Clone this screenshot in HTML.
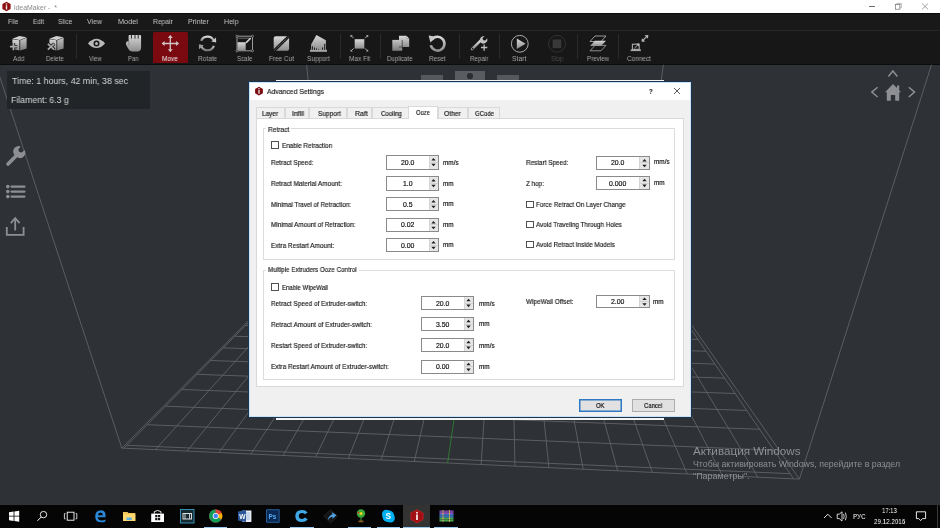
<!DOCTYPE html>
<html><head><meta charset="utf-8"><title>ideaMaker</title>
<style>
*{margin:0;padding:0;box-sizing:border-box}
html,body{width:940px;height:528px;overflow:hidden;background:#2e3135;font-family:"Liberation Sans", sans-serif;position:relative}
.a{position:absolute}
.k{-webkit-text-stroke:0.18px currentColor}
.t{position:absolute;line-height:1;white-space:nowrap;transform-origin:0 50%;will-change:transform}
svg{overflow:visible}
</style></head><body>
<div class="a" style="left:0.00px;top:0.00px;width:940.00px;height:13.20px;background:#ffffff;"></div>
<div class="a" style="left:0.00px;top:13.20px;width:940.00px;height:1.20px;background:#0b0b0b;"></div>
<svg class="a" style="left:1px;top:1px" width="11" height="11" viewBox="0 0 11 11">
<polygon points="5.5,0.8 9.6,3 9.6,8 5.5,10.2 1.4,8 1.4,3" fill="#8e0f12"/>
<rect x="4.8" y="4.3" width="1.4" height="4.2" fill="#e9e9e9"/><rect x="4.8" y="2.4" width="1.4" height="1.2" fill="#e9e9e9"/></svg>
<div class="t " style="left:13.60px;top:5px;font-size:6.90px;color:#8a8a8a;">ideaMaker - &nbsp;*</div>
<div class="a" style="left:868.90px;top:5.70px;width:6.00px;height:0.70px;background:#6a6a6a;"></div>
<svg class="a" style="left:894px;top:2px" width="9" height="9" viewBox="0 0 9 9"><rect x="1.3" y="2.6" width="4.6" height="4.6" fill="none" stroke="#666" stroke-width="0.65"/><path d="M2.8 2.6 V1.4 H7.3 V5.8 H5.9" fill="none" stroke="#888" stroke-width="0.6"/></svg>
<svg class="a" style="left:920px;top:1.5px" width="10" height="9" viewBox="0 0 10 9"><path d="M2.1 1.5 L8.1 7.4 M8.1 1.5 L2.1 7.4" stroke="#707070" stroke-width="0.65"/></svg>
<div class="a" style="left:0.00px;top:14.40px;width:940.00px;height:15.20px;background:#191919;"></div>
<div class="a" style="left:0.00px;top:29.60px;width:940.00px;height:0.60px;background:#0e0e0e;"></div>
<div class="a" style="left:0.00px;top:30.20px;width:940.00px;height:1.00px;background:#272727;"></div>
<div class="t " style="left:7.80px;top:19px;font-size:7.12px;color:#c4c4c4;transform:scaleX(0.915);">File</div>
<div class="t " style="left:32.80px;top:19px;font-size:7.12px;color:#c4c4c4;transform:scaleX(0.896);">Edit</div>
<div class="t " style="left:57.90px;top:19px;font-size:7.12px;color:#c4c4c4;transform:scaleX(0.926);">Slice</div>
<div class="t " style="left:86.90px;top:19px;font-size:7.12px;color:#c4c4c4;transform:scaleX(0.967);">View</div>
<div class="t " style="left:117.60px;top:19px;font-size:7.12px;color:#c4c4c4;transform:scaleX(1.026);">Model</div>
<div class="t " style="left:153.20px;top:19px;font-size:7.12px;color:#c4c4c4;transform:scaleX(0.948);">Repair</div>
<div class="t " style="left:188.00px;top:19px;font-size:7.12px;color:#c4c4c4;transform:scaleX(0.991);">Printer</div>
<div class="t " style="left:223.80px;top:19px;font-size:7.12px;color:#c4c4c4;transform:scaleX(0.983);">Help</div>
<div class="a" style="left:0.00px;top:31.20px;width:940.00px;height:33.00px;background:#171717;"></div>
<div class="a" style="left:0.00px;top:64.20px;width:940.00px;height:0.60px;background:#0d0d0d;"></div>
<div class="a" style="left:76.10px;top:34.00px;width:1.00px;height:25.00px;background:#2a2a2a;"></div>
<div class="a" style="left:339.70px;top:34.00px;width:1.00px;height:25.00px;background:#2a2a2a;"></div>
<div class="a" style="left:380.10px;top:34.00px;width:1.00px;height:25.00px;background:#2a2a2a;"></div>
<div class="a" style="left:458.50px;top:34.00px;width:1.00px;height:25.00px;background:#2a2a2a;"></div>
<div class="a" style="left:498.80px;top:34.00px;width:1.00px;height:25.00px;background:#2a2a2a;"></div>
<div class="a" style="left:576.50px;top:34.00px;width:1.00px;height:25.00px;background:#2a2a2a;"></div>
<div class="a" style="left:618.00px;top:34.00px;width:1.00px;height:25.00px;background:#2a2a2a;"></div>
<div class="a" style="left:152.80px;top:31.80px;width:35.30px;height:31.70px;background:#7a0a10;border-radius:1.5px;"></div>
<div class="t " style="left:12.80px;top:56px;font-size:6.70px;color:#a6a6a6;transform:scaleX(0.939);">Add</div>
<div class="t " style="left:46.05px;top:56px;font-size:6.70px;color:#a6a6a6;transform:scaleX(0.924);">Delete</div>
<div class="t " style="left:89.40px;top:56px;font-size:6.70px;color:#a6a6a6;transform:scaleX(0.874);">View</div>
<div class="t " style="left:127.90px;top:56px;font-size:6.70px;color:#a6a6a6;transform:scaleX(0.872);">Pan</div>
<div class="t " style="left:162.05px;top:56px;font-size:6.70px;color:#f2f2f2;transform:scaleX(0.958);">Move</div>
<div class="t " style="left:197.80px;top:56px;font-size:6.70px;color:#a6a6a6;transform:scaleX(0.972);">Rotate</div>
<div class="t " style="left:236.60px;top:56px;font-size:6.70px;color:#a6a6a6;transform:scaleX(0.918);">Scale</div>
<div class="t " style="left:268.80px;top:56px;font-size:6.70px;color:#a6a6a6;transform:scaleX(0.959);">Free Cut</div>
<div class="t " style="left:306.80px;top:56px;font-size:6.70px;color:#a6a6a6;transform:scaleX(0.971);">Support</div>
<div class="t " style="left:348.85px;top:56px;font-size:6.70px;color:#a6a6a6;transform:scaleX(0.969);">Max Fit</div>
<div class="t " style="left:387.45px;top:56px;font-size:6.70px;color:#a6a6a6;transform:scaleX(0.912);">Duplicate</div>
<div class="t " style="left:429.00px;top:56px;font-size:6.70px;color:#a6a6a6;transform:scaleX(0.948);">Reset</div>
<div class="t " style="left:469.55px;top:56px;font-size:6.70px;color:#a6a6a6;transform:scaleX(0.927);">Repair</div>
<div class="t " style="left:512.45px;top:56px;font-size:6.70px;color:#a6a6a6;transform:scaleX(1.010);">Start</div>
<div class="t " style="left:550.60px;top:56px;font-size:6.70px;color:#4a4a4a;transform:scaleX(0.885);">Stop</div>
<div class="t " style="left:586.80px;top:56px;font-size:6.70px;color:#a6a6a6;transform:scaleX(0.931);">Preview</div>
<div class="t " style="left:626.90px;top:56px;font-size:6.70px;color:#a6a6a6;transform:scaleX(0.961);">Connect</div>
<svg class="a" style="left:0;top:0" width="940" height="66" viewBox="0 0 940 66">
<defs>
<linearGradient id="g1" x1="0" y1="0" x2="0" y2="1"><stop offset="0" stop-color="#d8d8d8"/><stop offset="1" stop-color="#8e8e8e"/></linearGradient>
<linearGradient id="g2" x1="0" y1="0" x2="0" y2="1"><stop offset="0" stop-color="#c4c4c4"/><stop offset="1" stop-color="#7a7a7a"/></linearGradient>
</defs>
<!-- Add -->
<polygon points="12.4,38.7 19.3,35.9 26.6,37.3 19.8,39.9" fill="#d0d0d0"/>
<polygon points="12.4,39.2 19.4,40.2 19.4,50.5 12.4,48.8" fill="url(#g1)"/>
<polygon points="20.2,40.2 26.6,37.7 26.6,48.6 20.2,50.5" fill="url(#g2)"/>
<path d="M9.7 46.6 H17.2 M13.45 42.9 V50.4" stroke="#161616" stroke-width="3.4"/>
<path d="M9.9 46.6 H17 M13.45 43.1 V50.2" stroke="#aaaaaa" stroke-width="1.8"/>
<!-- Delete -->
<polygon points="49.4,38.7 56.3,35.9 63.6,37.3 56.8,39.9" fill="#d0d0d0"/>
<polygon points="49.4,39.2 56.4,40.2 56.4,50.5 49.4,48.8" fill="url(#g1)"/>
<polygon points="57.2,40.2 63.6,37.7 63.6,48.6 57.2,50.5" fill="url(#g2)"/>
<path d="M47.6 43.6 L54.4 49.8 M54.4 43.6 L47.6 49.8" stroke="#161616" stroke-width="3.2"/>
<path d="M47.8 43.8 L54.2 49.6 M54.2 43.8 L47.8 49.6" stroke="#aaaaaa" stroke-width="1.7"/>
<!-- View eye -->
<path d="M87.9 43.4 Q96.5 34.2 105.1 43.4 Q96.5 52.6 87.9 43.4 Z" fill="#b8b8b8"/>
<circle cx="96.5" cy="43.4" r="3.0" fill="#141414"/>
<circle cx="96.5" cy="43.4" r="1.5" fill="#b8b8b8"/>
<!-- Pan hand -->
<path d="M128.6 36 Q128.6 34.9 129.6 34.9 H140 Q141.1 34.9 141.1 36 V47.5 Q141.1 51.5 137.1 51.5 H132.6 Q129.6 51.5 128.4 49 L126.2 45 Q125.6 43.6 126.2 42.2 Q127 40.6 128.6 41.4 Z" fill="url(#g1)"/>
<path d="M131.4 34.8 V38.6 M135 34.8 V38.6 M138.2 34.8 V38.6" stroke="#161616" stroke-width="0.9"/>
<path d="M128.8 41.4 V45.5" stroke="#6a6a6a" stroke-width="0.5"/>
<!-- Move arrows -->
<path d="M162.5 43.5 H178.2 M170.3 35.8 V51.4" stroke="#d2c4c4" stroke-width="1.3"/>
<path d="M161.7 43.5 L164.6 41 V46 Z M179 43.5 L176.1 41 V46 Z M170.3 35 L167.8 37.9 H172.8 Z M170.3 52.1 L167.8 49.2 H172.8 Z" fill="#d2c4c4"/>
<!-- Rotate -->
<path d="M201.2 40.8 A6.8 6.8 0 0 1 213.6 40.3" fill="none" stroke="url(#g1)" stroke-width="2.2"/>
<path d="M213.9 45.8 A6.8 6.8 0 0 1 201.4 46.4" fill="none" stroke="url(#g2)" stroke-width="2.2"/>
<path d="M216 37.5 L216.2 42.6 L211.3 41.6 Z" fill="#c8c8c8"/>
<path d="M199 49.2 L198.9 44.2 L203.8 45.2 Z" fill="#9a9a9a"/>
<!-- Scale -->
<rect x="237" y="36.2" width="15.5" height="14.6" fill="none" stroke="#9a9a9a" stroke-width="1"/>
<path d="M238.2 38.2 H251.2" stroke="#8a8a8a" stroke-width="0.7"/>
<rect x="237.5" y="42.2" width="8.2" height="8.3" fill="url(#g1)"/>
<path d="M246.4 42.4 L250.2 38.6" stroke="#cfcfcf" stroke-width="1.5" stroke-linecap="round"/>
<circle cx="237" cy="36.2" r="1.1" fill="#161616" stroke="#aaa" stroke-width="0.6"/>
<circle cx="252.5" cy="36.2" r="1.1" fill="#161616" stroke="#aaa" stroke-width="0.6"/>
<circle cx="237" cy="50.8" r="1.1" fill="#161616" stroke="#aaa" stroke-width="0.6"/>
<circle cx="252.5" cy="50.8" r="1.1" fill="#161616" stroke="#aaa" stroke-width="0.6"/>
<!-- Free Cut -->
<rect x="273.7" y="36.3" width="15.4" height="14.4" rx="2" fill="url(#g1)"/>
<path d="M273.6 51.2 L289.4 35.8" stroke="#161616" stroke-width="2.8"/>
<path d="M274.4 50.4 L288.6 36.6" stroke="#b0b0b0" stroke-width="0.6" stroke-dasharray="1 0.7"/>
<!-- Support -->
<polygon points="311.1,44.6 316.4,35 325.9,40.3 325.9,50 311.1,50" fill="url(#g1)"/>
<rect x="310" y="49.8" width="17" height="2" fill="#a8a8a8"/>
<g fill="#161616">
<rect x="311.9" y="45.9" width="0.9" height="4" rx="0.45"/><rect x="314" y="47" width="0.9" height="2.9" rx="0.45"/>
<rect x="316" y="48.1" width="0.9" height="1.8" rx="0.45"/><rect x="318.1" y="49" width="0.9" height="0.9" rx="0.45"/>
<rect x="322" y="47" width="0.9" height="2.9" rx="0.45"/><rect x="324.2" y="43.8" width="0.9" height="6.1" rx="0.45"/>
</g>
<!-- Max Fit -->
<rect x="354.7" y="39.2" width="9.6" height="9.4" fill="url(#g1)"/>
<path d="M351 35.6 L353.6 38.2 M367.7 35.6 L365.1 38.2 M351 51 L353.6 48.4 M367.7 51 L365.1 48.4" stroke="#a8a8a8" stroke-width="1"/>
<path d="M350.4 35 L352.8 35.2 L350.6 37.4 Z M368.3 35 L365.9 35.2 L368.1 37.4 Z M350.4 51.6 L352.8 51.4 L350.6 49.2 Z M368.3 51.6 L365.9 51.4 L368.1 49.2 Z" fill="#a8a8a8"/>
<!-- Duplicate -->
<path d="M399 35.8 H406.3 L409.2 38.7 V47 H399 Z" fill="url(#g1)"/>
<path d="M406.3 35.8 L406.5 38.5 L409.2 38.7" fill="#e0e0e0" stroke="#555" stroke-width="0.3"/>
<rect x="392.3" y="39.9" width="9.9" height="10.9" fill="url(#g2)"/>
<path d="M402.2 39.9 V47 H399" fill="none" stroke="#171717" stroke-width="0.6"/>
<!-- Reset -->
<path d="M431.8 39.8 A6.9 6.9 0 1 1 430.8 45.2" fill="none" stroke="url(#g1)" stroke-width="2.6"/>
<path d="M428.6 35.6 L436.4 36.8 L430.4 42.4 Z" fill="#c8c8c8"/>
<!-- Repair -->
<path d="M472 49.2 L480.6 40.6" stroke="url(#g1)" stroke-width="2.6" stroke-linecap="round"/>
<path d="M480 41.5 A4.2 4.2 0 0 1 484.5 36 L482.4 38.3 L483.3 40.2 L485.3 40.6 L487.3 38.3 A4.2 4.2 0 0 1 481.6 43.3 Z" fill="#c2c2c2"/>
<circle cx="472.6" cy="48.6" r="0.8" fill="#171717"/>
<path d="M481 47.5 H487.3 M484.15 44.4 V50.8" stroke="#bdbdbd" stroke-width="1.3"/>
<!-- Start -->
<circle cx="519.8" cy="43.8" r="8.4" fill="none" stroke="#a9a9a9" stroke-width="1"/>
<path d="M516.8 38.6 L525.6 43.8 L516.8 49 Z" fill="url(#g1)"/>
<!-- Stop -->
<circle cx="557" cy="43.8" r="8.4" fill="none" stroke="#333" stroke-width="1"/>
<rect x="552.6" y="39.4" width="8.8" height="8.8" fill="#383838"/>
<!-- Preview -->
<polygon points="595,36 606,36 601,41.5 590,41.5" fill="none" stroke="#a9a9a9" stroke-width="0.9"/>
<polygon points="595,40.8 606,40.8 601,46 590,46" fill="url(#g1)"/>
<polygon points="595,45.4 606,45.4 601,50.8 590,50.8" fill="none" stroke="#9a9a9a" stroke-width="0.9"/>
<!-- Connect -->
<rect x="632.4" y="44.2" width="6.8" height="5.2" fill="#1a1a1a" stroke="#a9a9a9" stroke-width="1.1"/>
<rect x="630.7" y="49.4" width="10.2" height="1.7" fill="#a9a9a9"/>
<path d="M634.4 48.2 L638.2 44.6" stroke="#b8b8b8" stroke-width="0.9"/>
<path d="M639.2 43.4 L636.2 43.8 L638.8 46.4 Z" fill="#b8b8b8"/>
<path d="M642.2 41.2 L647.6 35.6" stroke="#b8b8b8" stroke-width="1.1"/>
<path d="M648.3 35 L644.6 35.3 L648 38.7 Z M641.6 41.8 L641.9 38.2 L645.2 41.5 Z" fill="#b8b8b8"/>
</svg>
<svg class="a" style="left:0;top:0" width="940" height="505" viewBox="0 0 940 505">
<g stroke="#63666a" stroke-width="0.85" fill="none"><line x1="126.93" y1="445.30" x2="790.05" y2="473.64"/><line x1="147.28" y1="424.71" x2="773.97" y2="450.20"/><line x1="165.56" y1="406.21" x2="759.63" y2="429.28"/><line x1="182.08" y1="389.51" x2="746.74" y2="410.49"/><line x1="197.07" y1="374.34" x2="735.11" y2="393.52"/><line x1="210.74" y1="360.52" x2="724.55" y2="378.12"/><line x1="223.25" y1="347.86" x2="714.93" y2="364.09"/><line x1="234.75" y1="336.23" x2="706.13" y2="351.25"/><line x1="245.35" y1="325.50" x2="698.03" y2="339.44"/><line x1="255.16" y1="315.58" x2="690.57" y2="328.56"/><line x1="264.26" y1="306.37" x2="683.68" y2="318.50"/><line x1="272.73" y1="297.81" x2="677.28" y2="309.17"/><line x1="280.62" y1="289.82" x2="671.32" y2="300.49"/><line x1="288.00" y1="282.36" x2="665.77" y2="292.39"/><line x1="294.92" y1="275.36" x2="660.59" y2="284.83"/><line x1="301.41" y1="268.80" x2="655.73" y2="277.74"/><line x1="307.51" y1="262.62" x2="651.17" y2="271.09"/><line x1="313.26" y1="256.80" x2="646.88" y2="264.83"/><line x1="318.69" y1="251.31" x2="642.84" y2="258.94"/><line x1="323.83" y1="246.11" x2="639.02" y2="253.38"/><line x1="328.69" y1="241.20" x2="635.42" y2="248.12"/><line x1="124.06" y1="448.20" x2="328.69" y2="241.20"/><line x1="155.46" y1="449.64" x2="343.61" y2="241.53"/><line x1="187.07" y1="451.09" x2="358.58" y2="241.87"/><line x1="218.89" y1="452.54" x2="373.59" y2="242.21"/><line x1="250.92" y1="454.01" x2="388.64" y2="242.55"/><line x1="283.16" y1="455.48" x2="403.73" y2="242.89"/><line x1="315.61" y1="456.97" x2="418.87" y2="243.23"/><line x1="348.28" y1="458.46" x2="434.05" y2="243.57"/><line x1="381.16" y1="459.97" x2="449.28" y2="243.92"/><line x1="414.27" y1="461.48" x2="464.54" y2="244.26"/><line x1="481.15" y1="464.54" x2="495.21" y2="244.95"/><line x1="514.93" y1="466.09" x2="510.61" y2="245.30"/><line x1="548.94" y1="467.64" x2="526.05" y2="245.65"/><line x1="583.18" y1="469.21" x2="541.54" y2="246.00"/><line x1="617.65" y1="470.78" x2="557.07" y2="246.35"/><line x1="652.36" y1="472.37" x2="572.65" y2="246.70"/><line x1="687.31" y1="473.97" x2="588.27" y2="247.05"/><line x1="722.50" y1="475.58" x2="603.94" y2="247.41"/><line x1="757.93" y1="477.20" x2="619.66" y2="247.76"/><line x1="793.61" y1="478.83" x2="635.42" y2="248.12"/><polyline points="331.91,236.86 121.80,448.10 799.40,479.10 639.91,250.95" fill="none"/></g>
<line x1="447.60" y1="463.01" x2="479.85" y2="244.61" stroke="#2f8a2f" stroke-width="0.8"/>
<g stroke="#6e7175" stroke-width="0.7">
<line x1="121.8" y1="448.1" x2="-4.2" y2="64.8"/>
<line x1="799.4" y1="479.1" x2="931.5" y2="64.8"/>
<line x1="306.6" y1="64.8" x2="308.2" y2="81"/>
<line x1="663.4" y1="64.8" x2="661.2" y2="81"/>
</g>
</svg>
<div class="a" style="left:6.50px;top:70.90px;width:143.50px;height:37.90px;background:#222528;"></div>
<div class="t " style="left:11.90px;top:77px;font-size:9.30px;color:#d8d8d8;transform:scaleX(0.950);">Time: 1 hours, 42 min, 38 sec</div>
<div class="t " style="left:11.20px;top:96px;font-size:9.30px;color:#d8d8d8;transform:scaleX(0.940);">Filament: 6.3 g</div>
<svg class="a" style="left:0;top:140px" width="40" height="100" viewBox="0 140 40 100">
<g fill="#8d8f92" stroke="#8d8f92">
<path d="M8 164 L17.5 154.5" stroke-width="3.6" stroke-linecap="round"/>
<path d="M16.2 156.2 A5.3 5.3 0 0 1 20.8 146.6 L18.3 149.4 L19.2 152 L21.9 152.6 L24.5 150 A5.3 5.3 0 0 1 17.8 157.6 Z" stroke="none"/>
<circle cx="7.8" cy="186.6" r="1.8" stroke="none"/><circle cx="7.8" cy="191.6" r="1.8" stroke="none"/><circle cx="7.8" cy="196.6" r="1.8" stroke="none"/>
<path d="M11.5 186.6 H24.5 M11.5 191.6 H24.5 M11.5 196.6 H24.5" stroke-width="2.2" stroke-linecap="round"/>
<path d="M6.8 227 V234.8 H23.6 V227" fill="none" stroke-width="1.8"/>
<path d="M15.2 230.5 V219.5" stroke-width="1.8"/>
<path d="M10.8 223.2 L15.2 218.2 L19.6 223.2" fill="none" stroke-width="1.8"/>
</g></svg>
<svg class="a" style="left:860px;top:60px" width="70" height="50" viewBox="860 60 70 50">
<g fill="none" stroke="#8d8f92" stroke-width="1.5">
<path d="M888.4 76.4 L892.9 71 L897.4 76.4"/>
<path d="M877.6 87.2 L871.8 92.1 L877.6 97"/>
<path d="M908.8 87.2 L914.6 92.1 L908.8 97"/>
</g>
<path d="M885 92.2 L893 84 L897 88 L897 85.6 L899.2 85.6 L899.2 90.2 L901 92.2 L899.2 92.2 L899.2 100.8 L895.2 100.8 L895.2 95 L890.8 95 L890.8 100.8 L886.8 100.8 L886.8 92.2 Z" fill="#8d8f92"/>
</svg>
<div class="a" style="left:421.00px;top:75.20px;width:21.60px;height:4.80px;background:#55585c;"></div>
<div class="a" style="left:454.80px;top:71.00px;width:30.60px;height:9.00px;background:#595c60;"></div>
<svg class="a" style="left:466px;top:72px" width="8" height="8"><circle cx="4" cy="4" r="3.1" fill="#2b2e31"/></svg>
<div class="a" style="left:496.70px;top:74.80px;width:22.40px;height:5.20px;background:#55585c;"></div>
<div class="t " style="left:692.80px;top:446px;font-size:10.75px;color:#8e9093;transform:scaleX(1.086);">Активация Windows</div>
<div class="t " style="left:692.80px;top:460px;font-size:8.66px;color:#8e9093;transform:scaleX(1.013);">Чтобы активировать Windows, перейдите в раздел</div>
<div class="t " style="left:692.80px;top:472px;font-size:8.66px;color:#8e9093;transform:scaleX(1.035);">"Параметры".</div>
<div class="a" style="left:275.50px;top:79.80px;width:388.50px;height:1.80px;background:#f4f4f4;"></div>
<div class="a" style="left:276.00px;top:417.60px;width:388.00px;height:2.40px;background:#f4f4f4;"></div>
<div class="a" style="left:248.00px;top:81.00px;width:444.00px;height:337.20px;background:#f0f0f0;border:1px solid #1a3553;"></div>
<div class="a" style="left:249.00px;top:82.00px;width:442.00px;height:1.00px;background:#c9e2f3;"></div>
<div class="a" style="left:249.00px;top:82.00px;width:1.00px;height:335.20px;background:#c9e2f3;"></div>
<div class="a" style="left:690.00px;top:82.00px;width:1.00px;height:335.20px;background:#c9e2f3;"></div>
<div class="a" style="left:249.00px;top:416.20px;width:442.00px;height:1.00px;background:#c9e2f3;"></div>
<div class="a" style="left:250.00px;top:83.00px;width:440.00px;height:16.80px;background:#ffffff;"></div>
<svg class="a" style="left:254px;top:86px" width="10" height="10" viewBox="0 0 10 10">
<polygon points="5,0.8 8.9,3 8.9,7.2 5,9.4 1.1,7.2 1.1,3" fill="#7d0c10"/>
<rect x="4.35" y="3.9" width="1.3" height="3.8" fill="#eaeaea"/><rect x="4.35" y="2.1" width="1.3" height="1.1" fill="#eaeaea"/></svg>
<div class="t k" style="left:267.00px;top:88px;font-size:7.82px;color:#1a1a1a;transform:scaleX(0.874);">Advanced Settings</div>
<div class="t k" style="left:649.00px;top:88px;font-size:8.10px;color:#222;font-weight:bold;transform:scaleX(0.728);">?</div>
<svg class="a" style="left:673px;top:87px" width="8" height="8" viewBox="0 0 8 8"><path d="M1 1 L7 7 M7 1 L1 7" stroke="#333" stroke-width="0.8"/></svg>
<div class="a" style="left:256.00px;top:107.40px;width:29.00px;height:11.20px;background:#f0f0f0;border:1px solid #d9d9d9;border-bottom:none;"></div>
<div class="t k" style="left:261.80px;top:110px;font-size:7.00px;color:#1a1a1a;transform:scaleX(0.914);">Layer</div>
<div class="a" style="left:285.00px;top:107.40px;width:24.00px;height:11.20px;background:#f0f0f0;border:1px solid #d9d9d9;border-bottom:none;"></div>
<div class="t k" style="left:292.00px;top:110px;font-size:7.00px;color:#1a1a1a;transform:scaleX(0.956);">Infill</div>
<div class="a" style="left:309.00px;top:107.40px;width:37.50px;height:11.20px;background:#f0f0f0;border:1px solid #d9d9d9;border-bottom:none;"></div>
<div class="t k" style="left:317.70px;top:110px;font-size:7.00px;color:#1a1a1a;transform:scaleX(0.934);">Support</div>
<div class="a" style="left:346.50px;top:107.40px;width:25.50px;height:11.20px;background:#f0f0f0;border:1px solid #d9d9d9;border-bottom:none;"></div>
<div class="t k" style="left:354.60px;top:110px;font-size:7.00px;color:#1a1a1a;transform:scaleX(0.989);">Raft</div>
<div class="a" style="left:372.00px;top:107.40px;width:36.50px;height:11.20px;background:#f0f0f0;border:1px solid #d9d9d9;border-bottom:none;"></div>
<div class="t k" style="left:380.80px;top:110px;font-size:7.00px;color:#1a1a1a;transform:scaleX(0.876);">Cooling</div>
<div class="a" style="left:438.00px;top:107.40px;width:29.50px;height:11.20px;background:#f0f0f0;border:1px solid #d9d9d9;border-bottom:none;"></div>
<div class="t k" style="left:444.00px;top:110px;font-size:7.00px;color:#1a1a1a;transform:scaleX(0.954);">Other</div>
<div class="a" style="left:467.50px;top:107.40px;width:32.10px;height:11.20px;background:#f0f0f0;border:1px solid #d9d9d9;border-bottom:none;"></div>
<div class="t k" style="left:475.00px;top:110px;font-size:7.00px;color:#1a1a1a;transform:scaleX(0.852);">GCode</div>
<div class="a" style="left:255.70px;top:118.30px;width:428.10px;height:268.30px;background:#ffffff;border:1px solid #d9d9d9;"></div>
<div class="a" style="left:408.20px;top:106.40px;width:30.10px;height:13.00px;background:#ffffff;border:1px solid #d9d9d9;border-bottom:none;"></div>
<div class="t k" style="left:416.00px;top:109px;font-size:7.00px;color:#1a1a1a;transform:scaleX(0.837);">Ooze</div>
<div class="a" style="left:262.50px;top:128.30px;width:412.10px;height:131.60px;border:1px solid #dcdcdc;"></div>
<div class="a" style="left:265.70px;top:127.30px;width:25.30px;height:3.00px;background:#ffffff;"></div>
<div class="t k" style="left:267.70px;top:126px;font-size:7.54px;color:#1a1a1a;transform:scaleX(0.876);">Retract</div>
<div class="a" style="left:271.00px;top:141.00px;width:7.60px;height:7.60px;background:#ffffff;border:1px solid #505050;"></div>
<div class="t k" style="left:281.80px;top:142px;font-size:7.40px;color:#1a1a1a;transform:scaleX(0.853);">Enable Retraction</div>
<div class="t k" style="left:270.80px;top:160px;font-size:7.12px;color:#1a1a1a;transform:scaleX(0.897);">Retract Speed:</div>
<div class="a" style="left:386.20px;top:155.30px;width:53.20px;height:14.30px;background:#ffffff;border:1px solid #8a8a8a;"></div>
<div class="a" style="left:429.00px;top:156.30px;width:9.40px;height:12.30px;background:#e6e6e6;border-left:1px solid #d4d4d4;"></div>
<div class="a" style="left:430.00px;top:162.10px;width:8.40px;height:0.70px;background:#d2d2d2;"></div>
<svg class="a" style="left:431.45px;top:155.30px" width="5" height="14.30" viewBox="0 0 5 14.30"><path d="M0.3 5.55 L2.5 2.95 L4.7 5.55 Z M0.3 8.75 L2.5 11.35 L4.7 8.75 Z" fill="#1e1e1e"/></svg>
<div class="t k" style="left:400.89px;top:160px;font-size:6.90px;color:#111;">20.0</div>
<div class="t k" style="left:442.70px;top:160px;font-size:6.40px;color:#1a1a1a;">mm/s</div>
<div class="t k" style="left:270.80px;top:181px;font-size:7.12px;color:#1a1a1a;transform:scaleX(0.906);">Retract Material Amount:</div>
<div class="a" style="left:386.20px;top:176.30px;width:53.20px;height:14.30px;background:#ffffff;border:1px solid #8a8a8a;"></div>
<div class="a" style="left:429.00px;top:177.30px;width:9.40px;height:12.30px;background:#e6e6e6;border-left:1px solid #d4d4d4;"></div>
<div class="a" style="left:430.00px;top:183.10px;width:8.40px;height:0.70px;background:#d2d2d2;"></div>
<svg class="a" style="left:431.45px;top:176.30px" width="5" height="14.30" viewBox="0 0 5 14.30"><path d="M0.3 5.55 L2.5 2.95 L4.7 5.55 Z M0.3 8.75 L2.5 11.35 L4.7 8.75 Z" fill="#1e1e1e"/></svg>
<div class="t k" style="left:402.80px;top:181px;font-size:6.90px;color:#111;">1.0</div>
<div class="t k" style="left:442.70px;top:181px;font-size:6.40px;color:#1a1a1a;">mm</div>
<div class="t k" style="left:270.80px;top:202px;font-size:7.12px;color:#1a1a1a;transform:scaleX(0.889);">Minimal Travel of Retraction:</div>
<div class="a" style="left:386.20px;top:197.00px;width:53.20px;height:14.30px;background:#ffffff;border:1px solid #8a8a8a;"></div>
<div class="a" style="left:429.00px;top:198.00px;width:9.40px;height:12.30px;background:#e6e6e6;border-left:1px solid #d4d4d4;"></div>
<div class="a" style="left:430.00px;top:203.80px;width:8.40px;height:0.70px;background:#d2d2d2;"></div>
<svg class="a" style="left:431.45px;top:197.00px" width="5" height="14.30" viewBox="0 0 5 14.30"><path d="M0.3 5.55 L2.5 2.95 L4.7 5.55 Z M0.3 8.75 L2.5 11.35 L4.7 8.75 Z" fill="#1e1e1e"/></svg>
<div class="t k" style="left:402.80px;top:202px;font-size:6.90px;color:#111;">0.5</div>
<div class="t k" style="left:442.70px;top:201px;font-size:6.40px;color:#1a1a1a;">mm</div>
<div class="t k" style="left:270.80px;top:222px;font-size:7.12px;color:#1a1a1a;transform:scaleX(0.889);">Minimal Amount of Retraction:</div>
<div class="a" style="left:386.20px;top:217.60px;width:53.20px;height:14.30px;background:#ffffff;border:1px solid #8a8a8a;"></div>
<div class="a" style="left:429.00px;top:218.60px;width:9.40px;height:12.30px;background:#e6e6e6;border-left:1px solid #d4d4d4;"></div>
<div class="a" style="left:430.00px;top:224.40px;width:8.40px;height:0.70px;background:#d2d2d2;"></div>
<svg class="a" style="left:431.45px;top:217.60px" width="5" height="14.30" viewBox="0 0 5 14.30"><path d="M0.3 5.55 L2.5 2.95 L4.7 5.55 Z M0.3 8.75 L2.5 11.35 L4.7 8.75 Z" fill="#1e1e1e"/></svg>
<div class="t k" style="left:400.89px;top:222px;font-size:6.90px;color:#111;">0.02</div>
<div class="t k" style="left:442.70px;top:222px;font-size:6.40px;color:#1a1a1a;">mm</div>
<div class="t k" style="left:270.80px;top:243px;font-size:7.12px;color:#1a1a1a;transform:scaleX(0.911);">Extra Restart Amount:</div>
<div class="a" style="left:386.20px;top:238.00px;width:53.20px;height:14.30px;background:#ffffff;border:1px solid #8a8a8a;"></div>
<div class="a" style="left:429.00px;top:239.00px;width:9.40px;height:12.30px;background:#e6e6e6;border-left:1px solid #d4d4d4;"></div>
<div class="a" style="left:430.00px;top:244.80px;width:8.40px;height:0.70px;background:#d2d2d2;"></div>
<svg class="a" style="left:431.45px;top:238.00px" width="5" height="14.30" viewBox="0 0 5 14.30"><path d="M0.3 5.55 L2.5 2.95 L4.7 5.55 Z M0.3 8.75 L2.5 11.35 L4.7 8.75 Z" fill="#1e1e1e"/></svg>
<div class="t k" style="left:400.89px;top:243px;font-size:6.90px;color:#111;">0.00</div>
<div class="t k" style="left:442.70px;top:242px;font-size:6.40px;color:#1a1a1a;">mm</div>
<div class="t k" style="left:526.00px;top:160px;font-size:7.12px;color:#1a1a1a;transform:scaleX(0.894);">Restart Speed:</div>
<div class="a" style="left:596.30px;top:155.60px;width:53.40px;height:14.30px;background:#ffffff;border:1px solid #8a8a8a;"></div>
<div class="a" style="left:639.30px;top:156.60px;width:9.40px;height:12.30px;background:#e6e6e6;border-left:1px solid #d4d4d4;"></div>
<div class="a" style="left:640.30px;top:162.40px;width:8.40px;height:0.70px;background:#d2d2d2;"></div>
<svg class="a" style="left:641.75px;top:155.60px" width="5" height="14.30" viewBox="0 0 5 14.30"><path d="M0.3 5.55 L2.5 2.95 L4.7 5.55 Z M0.3 8.75 L2.5 11.35 L4.7 8.75 Z" fill="#1e1e1e"/></svg>
<div class="t k" style="left:611.09px;top:160px;font-size:6.90px;color:#111;">20.0</div>
<div class="t k" style="left:653.60px;top:159px;font-size:6.40px;color:#1a1a1a;">mm/s</div>
<div class="t k" style="left:526.00px;top:181px;font-size:7.12px;color:#1a1a1a;transform:scaleX(0.891);">Z hop:</div>
<div class="a" style="left:596.30px;top:176.40px;width:53.40px;height:13.90px;background:#ffffff;border:1px solid #8a8a8a;"></div>
<div class="a" style="left:639.30px;top:177.40px;width:9.40px;height:11.90px;background:#e6e6e6;border-left:1px solid #d4d4d4;"></div>
<div class="a" style="left:640.30px;top:183.00px;width:8.40px;height:0.70px;background:#d2d2d2;"></div>
<svg class="a" style="left:641.75px;top:176.40px" width="5" height="13.90" viewBox="0 0 5 13.90"><path d="M0.3 5.35 L2.5 2.75 L4.7 5.35 Z M0.3 8.55 L2.5 11.15 L4.7 8.55 Z" fill="#1e1e1e"/></svg>
<div class="t k" style="left:609.17px;top:181px;font-size:6.90px;color:#111;">0.000</div>
<div class="t k" style="left:653.60px;top:180px;font-size:6.40px;color:#1a1a1a;">mm</div>
<div class="a" style="left:526.00px;top:201.00px;width:7.60px;height:7.40px;background:#ffffff;border:1px solid #505050;"></div>
<div class="t k" style="left:536.20px;top:201px;font-size:7.40px;color:#1a1a1a;transform:scaleX(0.852);">Force Retract On Layer Change</div>
<div class="a" style="left:526.00px;top:220.50px;width:7.60px;height:7.40px;background:#ffffff;border:1px solid #505050;"></div>
<div class="t k" style="left:536.20px;top:221px;font-size:7.40px;color:#1a1a1a;transform:scaleX(0.852);">Avoid Traveling Through Holes</div>
<div class="a" style="left:526.00px;top:240.60px;width:7.60px;height:7.40px;background:#ffffff;border:1px solid #505050;"></div>
<div class="t k" style="left:536.20px;top:241px;font-size:7.40px;color:#1a1a1a;transform:scaleX(0.858);">Avoid Retract Inside Models</div>
<div class="a" style="left:262.50px;top:269.60px;width:412.10px;height:110.00px;border:1px solid #dcdcdc;"></div>
<div class="a" style="left:265.90px;top:268.60px;width:92.90px;height:3.00px;background:#ffffff;"></div>
<div class="t k" style="left:267.90px;top:266px;font-size:7.40px;color:#1a1a1a;transform:scaleX(0.847);">Multiple Extruders Ooze Control</div>
<div class="a" style="left:271.40px;top:283.00px;width:7.40px;height:7.60px;background:#ffffff;border:1px solid #505050;"></div>
<div class="t k" style="left:282.00px;top:284px;font-size:7.26px;color:#1a1a1a;transform:scaleX(0.836);">Enable WipeWall</div>
<div class="t k" style="left:270.70px;top:300px;font-size:7.68px;color:#1a1a1a;transform:scaleX(0.839);">Retract Speed of Extruder-switch:</div>
<div class="a" style="left:421.20px;top:296.40px;width:53.20px;height:13.90px;background:#ffffff;border:1px solid #8a8a8a;"></div>
<div class="a" style="left:464.00px;top:297.40px;width:9.40px;height:11.90px;background:#e6e6e6;border-left:1px solid #d4d4d4;"></div>
<div class="a" style="left:465.00px;top:303.00px;width:8.40px;height:0.70px;background:#d2d2d2;"></div>
<svg class="a" style="left:466.45px;top:296.40px" width="5" height="13.90" viewBox="0 0 5 13.90"><path d="M0.3 5.35 L2.5 2.75 L4.7 5.35 Z M0.3 8.55 L2.5 11.15 L4.7 8.55 Z" fill="#1e1e1e"/></svg>
<div class="t k" style="left:435.89px;top:301px;font-size:6.90px;color:#111;">20.0</div>
<div class="t k" style="left:478.60px;top:301px;font-size:6.40px;color:#1a1a1a;">mm/s</div>
<div class="t k" style="left:270.70px;top:321px;font-size:7.68px;color:#1a1a1a;transform:scaleX(0.852);">Retract Amount of Extruder-switch:</div>
<div class="a" style="left:421.20px;top:317.20px;width:53.20px;height:13.90px;background:#ffffff;border:1px solid #8a8a8a;"></div>
<div class="a" style="left:464.00px;top:318.20px;width:9.40px;height:11.90px;background:#e6e6e6;border-left:1px solid #d4d4d4;"></div>
<div class="a" style="left:465.00px;top:323.80px;width:8.40px;height:0.70px;background:#d2d2d2;"></div>
<svg class="a" style="left:466.45px;top:317.20px" width="5" height="13.90" viewBox="0 0 5 13.90"><path d="M0.3 5.35 L2.5 2.75 L4.7 5.35 Z M0.3 8.55 L2.5 11.15 L4.7 8.55 Z" fill="#1e1e1e"/></svg>
<div class="t k" style="left:435.89px;top:322px;font-size:6.90px;color:#111;">3.50</div>
<div class="t k" style="left:478.60px;top:321px;font-size:6.40px;color:#1a1a1a;">mm</div>
<div class="t k" style="left:270.70px;top:342px;font-size:7.68px;color:#1a1a1a;transform:scaleX(0.839);">Restart Speed of Extruder-switch:</div>
<div class="a" style="left:421.20px;top:338.40px;width:53.20px;height:13.90px;background:#ffffff;border:1px solid #8a8a8a;"></div>
<div class="a" style="left:464.00px;top:339.40px;width:9.40px;height:11.90px;background:#e6e6e6;border-left:1px solid #d4d4d4;"></div>
<div class="a" style="left:465.00px;top:345.00px;width:8.40px;height:0.70px;background:#d2d2d2;"></div>
<svg class="a" style="left:466.45px;top:338.40px" width="5" height="13.90" viewBox="0 0 5 13.90"><path d="M0.3 5.35 L2.5 2.75 L4.7 5.35 Z M0.3 8.55 L2.5 11.15 L4.7 8.55 Z" fill="#1e1e1e"/></svg>
<div class="t k" style="left:435.89px;top:343px;font-size:6.90px;color:#111;">20.0</div>
<div class="t k" style="left:478.60px;top:343px;font-size:6.40px;color:#1a1a1a;">mm/s</div>
<div class="t k" style="left:270.70px;top:363px;font-size:7.68px;color:#1a1a1a;transform:scaleX(0.851);">Extra Restart Amount of Extruder-switch:</div>
<div class="a" style="left:421.20px;top:359.80px;width:53.20px;height:13.90px;background:#ffffff;border:1px solid #8a8a8a;"></div>
<div class="a" style="left:464.00px;top:360.80px;width:9.40px;height:11.90px;background:#e6e6e6;border-left:1px solid #d4d4d4;"></div>
<div class="a" style="left:465.00px;top:366.40px;width:8.40px;height:0.70px;background:#d2d2d2;"></div>
<svg class="a" style="left:466.45px;top:359.80px" width="5" height="13.90" viewBox="0 0 5 13.90"><path d="M0.3 5.35 L2.5 2.75 L4.7 5.35 Z M0.3 8.55 L2.5 11.15 L4.7 8.55 Z" fill="#1e1e1e"/></svg>
<div class="t k" style="left:435.89px;top:364px;font-size:6.90px;color:#111;">0.00</div>
<div class="t k" style="left:478.60px;top:364px;font-size:6.40px;color:#1a1a1a;">mm</div>
<div class="t k" style="left:525.80px;top:298px;font-size:7.40px;color:#1a1a1a;transform:scaleX(0.872);">WipeWall Offset:</div>
<div class="a" style="left:596.00px;top:294.60px;width:53.60px;height:13.30px;background:#ffffff;border:1px solid #8a8a8a;"></div>
<div class="a" style="left:639.20px;top:295.60px;width:9.40px;height:11.30px;background:#e6e6e6;border-left:1px solid #d4d4d4;"></div>
<div class="a" style="left:640.20px;top:300.90px;width:8.40px;height:0.70px;background:#d2d2d2;"></div>
<svg class="a" style="left:641.65px;top:294.60px" width="5" height="13.30" viewBox="0 0 5 13.30"><path d="M0.3 5.05 L2.5 2.45 L4.7 5.05 Z M0.3 8.25 L2.5 10.85 L4.7 8.25 Z" fill="#1e1e1e"/></svg>
<div class="t k" style="left:610.89px;top:299px;font-size:6.90px;color:#111;">2.00</div>
<div class="t k" style="left:653.00px;top:299px;font-size:6.40px;color:#1a1a1a;">mm</div>
<div class="a" style="left:579.00px;top:399.00px;width:42.80px;height:13.20px;background:#e1e1e1;border:1px solid #2f78c4;box-shadow:inset 0 0 0 0.5px #2f78c4;"></div>
<div class="t k" style="left:596.15px;top:402px;font-size:7.54px;color:#111;transform:scaleX(0.780);">OK</div>
<div class="a" style="left:632.20px;top:399.00px;width:42.80px;height:13.40px;background:#e1e1e1;border:1px solid #adadad;"></div>
<div class="t k" style="left:644.30px;top:402px;font-size:7.54px;color:#111;transform:scaleX(0.792);">Cancel</div>
<div class="a" style="left:0.00px;top:504.80px;width:940.00px;height:23.20px;background:#050505;"></div>
<div class="a" style="left:403.00px;top:504.80px;width:27.40px;height:23.20px;background:#333333;"></div>
<div class="a" style="left:203.90px;top:526.80px;width:23.00px;height:1.20px;background:#99c9ef;"></div>
<div class="a" style="left:290.00px;top:526.80px;width:24.00px;height:1.20px;background:#99c9ef;"></div>
<div class="a" style="left:348.00px;top:526.80px;width:23.00px;height:1.20px;background:#99c9ef;"></div>
<div class="a" style="left:376.70px;top:526.80px;width:23.00px;height:1.20px;background:#99c9ef;"></div>
<div class="a" style="left:403.00px;top:526.80px;width:27.40px;height:1.20px;background:#99c9ef;"></div>
<div class="a" style="left:434.00px;top:526.80px;width:24.00px;height:1.20px;background:#99c9ef;"></div>
<svg class="a" style="left:0;top:500px" width="940" height="28" viewBox="0 500 940 28">
<!-- windows -->
<path d="M9 512.2 L13.6 511.5 V515.8 H9 Z M14.4 511.4 L19.2 510.7 V515.8 H14.4 Z M9 516.6 H13.6 V520.9 L9 520.2 Z M14.4 516.6 H19.2 V521.7 L14.4 521 Z" fill="#ffffff"/>
<!-- search -->
<circle cx="43.5" cy="514.6" r="3.2" fill="none" stroke="#fff" stroke-width="0.9"/>
<path d="M41.2 517 L37.5 520.8" stroke="#fff" stroke-width="1"/>
<!-- task view -->
<rect x="67.2" y="512.2" width="6.8" height="8" fill="none" stroke="#fff" stroke-width="0.9"/>
<path d="M65.6 513.6 H64.4 V518.8 H65.6 M75.6 513.6 H76.8 V518.8 H75.6" fill="none" stroke="#fff" stroke-width="0.8"/>
<!-- edge -->
<path d="M105.6 517.2 H97.8 Q98.2 520.4 101.6 520.4 Q103.8 520.4 105.4 519.4 V521.4 Q103.6 522.3 101.2 522.3 Q95.2 522.3 95.2 516.4 Q95.2 510.2 101.2 510.2 Q106.2 510.2 105.6 517.2 Z M97.9 515.2 H102.9 Q102.8 512.6 100.6 512.6 Q98.3 512.6 97.9 515.2 Z" fill="#2b88d8" fill-rule="evenodd"/>
<!-- folder -->
<path d="M123 512 H127.5 L128.5 513 H135.3 V521 H123 Z" fill="#f0c65a"/>
<rect x="123" y="514.2" width="12.3" height="6.8" fill="#ffd86e"/>
<rect x="126.5" y="517.5" width="5.3" height="2.6" fill="#5db0e6"/>
<!-- store -->
<path d="M151.2 513.6 H164 V522 H151.2 Z" fill="#fff"/>
<path d="M154.3 513.6 V511.6 Q157.6 509.4 160.9 511.6 V513.6" fill="none" stroke="#fff" stroke-width="0.9"/>
<path d="M155.2 515 H157.4 V517.3 H155.2 Z M158 515 H160.2 V517.3 H158 Z M155.2 517.9 H157.4 V520.2 H155.2 Z M158 517.9 H160.2 V520.2 H158 Z" fill="#111"/>
<!-- film -->
<rect x="180.5" y="509.5" width="13.5" height="13.5" fill="#162a33" stroke="#3a9cc0" stroke-width="0.9"/>
<rect x="183" y="513.5" width="8.5" height="5.5" fill="none" stroke="#ddd" stroke-width="1"/>
<path d="M185 513.5 V519 M189.5 513.5 V519" stroke="#ddd" stroke-width="0.9"/>
<!-- chrome -->
<circle cx="215.7" cy="516" r="6.6" fill="#db4437"/>
<path d="M215.7 516 L221.4 519.3 A6.6 6.6 0 0 1 210 519.3 Z" fill="#0f9d58"/>
<path d="M215.7 516 L210 519.3 A6.6 6.6 0 0 1 215.7 509.4 L215.7 509.4 Z" fill="#0f9d58"/>
<path d="M215.7 516 L221.4 512.7 A6.6 6.6 0 0 1 221.4 519.3 Z" fill="#f4b400"/>
<path d="M215.7 516 L215.7 509.4 A6.6 6.6 0 0 1 221.4 512.7 Z" fill="#db4437"/>
<circle cx="215.7" cy="516" r="3" fill="#fff"/><circle cx="215.7" cy="516" r="2.3" fill="#4285f4"/>
<!-- word -->
<rect x="242.5" y="510.5" width="8.9" height="11.5" fill="#e9eef6"/>
<path d="M244.2 513 H250 M244.2 515 H250 M244.2 517 H250 M244.2 519 H250" stroke="#7a9acb" stroke-width="0.6"/>
<path d="M238 511.5 L246 510 V522 L238 520.5 Z" fill="#2b579a"/>
<text x="239.2" y="519.3" font-family="Liberation Sans" font-size="6.6" font-weight="bold" fill="#fff">W</text>
<!-- ps -->
<rect x="266.7" y="509.8" width="12.4" height="12.4" fill="#0a2a55" stroke="#3b8fe6" stroke-width="0.6"/>
<text x="268.6" y="518.8" font-family="Liberation Sans" font-size="6.4" font-weight="bold" fill="#58aaf5">Ps</text>
<!-- C -->
<path d="M307.6 512.4 Q305.5 510 302 510 Q295.3 510 295.3 516 Q295.3 522 302 522 Q305.6 522 307.8 519.5 L305 517.6 Q303.8 518.9 302.1 518.9 Q298.8 518.9 298.8 516 Q298.8 513.1 302.1 513.1 Q303.8 513.1 304.9 514.3 Z" fill="#3fa9e6"/>
<!-- arrow app -->
<path d="M330.6 509.5 L337.5 516.3 L330.6 523 L323.7 516.3 Z" fill="#151515" stroke="#333" stroke-width="0.5"/>
<path d="M327.8 520.3 Q328.4 515.6 332.6 514.2 L331.6 512 L336.4 515.2 L332.6 518.8 L332.4 516.6 Q329.6 517.4 327.8 520.3 Z" fill="#4ea6e8"/>
<!-- flower -->
<circle cx="361" cy="513.5" r="4.2" fill="#3da83a"/>
<circle cx="361" cy="513.5" r="1.6" fill="#f0d020"/>
<circle cx="358.4" cy="512.6" r="0.9" fill="#e23030"/>
<path d="M361 517.5 V521" stroke="#3da83a" stroke-width="1"/>
<rect x="358.6" y="520.5" width="4.8" height="1.8" fill="#8a5a2a"/>
<!-- skype -->
<circle cx="386.2" cy="514" r="4.2" fill="#00aff0"/><circle cx="390.6" cy="518.4" r="4.2" fill="#00aff0"/>
<circle cx="388.4" cy="516.2" r="6" fill="#00aff0"/>
<text x="385.6" y="519.3" font-family="Liberation Sans" font-size="8.4" font-weight="bold" fill="#fff">S</text>
<!-- ideamaker -->
<polygon points="417,509.6 423.2,513 423.2,519.5 417,522.9 410.8,519.5 410.8,513" fill="#a30e12" stroke="#e02a2a" stroke-width="0.5"/>
<rect x="416.2" y="514.4" width="1.6" height="5.6" fill="#fff"/><rect x="416.2" y="511.9" width="1.6" height="1.6" fill="#fff"/>
<!-- winrar -->
<rect x="439.5" y="510.5" width="14" height="3.6" fill="#8a4fbf"/>
<rect x="439.5" y="514.1" width="14" height="3.6" fill="#3a7fd0"/>
<rect x="439.5" y="517.7" width="14" height="3.8" fill="#48a850"/>
<path d="M443 510 V521.8 M449.5 510 V521.8" stroke="#d8b060" stroke-width="1"/>
<path d="M439.5 512 H453.5 M439.5 515.8 H453.5 M439.5 519.6 H453.5" stroke="#222" stroke-width="0.4"/>
<!-- tray -->
<path d="M824 518 L827.8 514.2 L831.6 518" fill="none" stroke="#fff" stroke-width="0.9"/>
<path d="M837.2 514.2 H839.2 L842 511.8 V521 L839.2 518.6 H837.2 Z" fill="none" stroke="#fff" stroke-width="0.8"/>
<path d="M843.6 514 Q844.6 516.4 843.6 518.8 M845.4 512.6 Q847.2 516.4 845.4 520.2" fill="none" stroke="#fff" stroke-width="0.8"/>
<path d="M916.4 511.8 H925.6 V518.6 H922.4 L920.6 520.6 L918.8 518.6 H916.4 Z" fill="none" stroke="#fff" stroke-width="0.9"/>
</svg>
<div class="t " style="left:852.90px;top:513px;font-size:7.82px;color:#ffffff;transform:scaleX(0.805);">РУС</div>
<div class="t " style="left:882.00px;top:507px;font-size:7.54px;color:#ffffff;transform:scaleX(0.784);">17:13</div>
<div class="t " style="left:873.70px;top:518px;font-size:8.10px;color:#ffffff;transform:scaleX(0.772);">29.12.2016</div>
<div class="a" style="left:936.60px;top:505.00px;width:0.80px;height:23.00px;background:#3a3a3a;"></div>
</body></html>
